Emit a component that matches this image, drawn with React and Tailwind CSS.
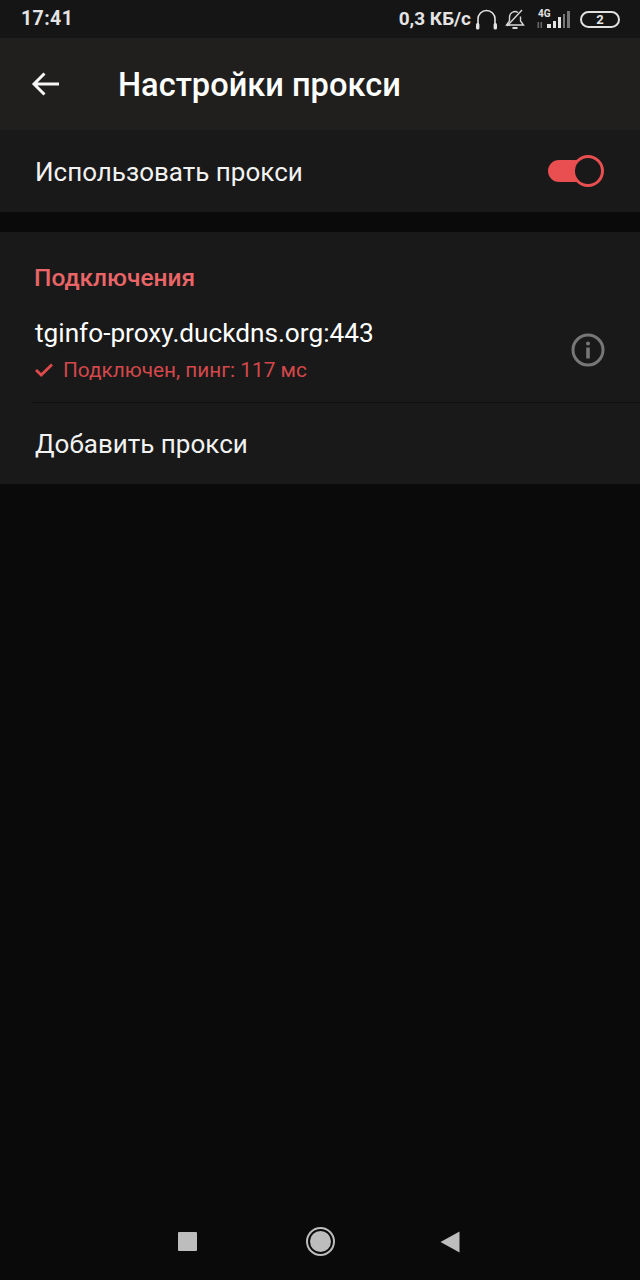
import React from 'react';

const roboto = { fontFamily: 'Roboto, sans-serif' };

function StatusBar() {
    return (
        <div className="h-[38px] bg-[#151515] flex items-center justify-between pl-[21px] pr-[20px] text-[#e4e4e4] font-bold">
            <span className="text-[19.5px] tracking-[0.4px]">17:41</span>
            <div className="flex items-center">
                <span className="text-[19px]">0,3 КБ/с</span>
                <svg className="ml-[4px]" width="23" height="22" viewBox="0 0 23 22" fill="none">
                    <path d="M3 17V11a8.5 8.5 0 0 1 17 0v6" stroke="#e4e4e4" strokeWidth="1.6" />
                    <rect x="1" y="15" width="3.4" height="6.5" rx="1.5" fill="#e4e4e4" />
                    <rect x="18.6" y="15" width="3.4" height="6.5" rx="1.5" fill="#e4e4e4" />
                </svg>
                <svg className="ml-[7px]" width="20" height="22" viewBox="0 0 20 22" fill="none" stroke="#d8d8d8" strokeWidth="1.4">
                    <path d="M4.5 13V9a5.5 5.5 0 0 1 8.5-4.5M15.5 8.5V13l3 4H4" />
                    <path d="M4.5 13 1.5 17H5" />
                    <path d="M7.5 20h5" strokeWidth="2" />
                    <path d="M17 2 2 18" />
                </svg>
                <div className="relative w-[36px] h-[20px] ml-[12px]">
                    <span className="absolute left-[1px] top-0 text-[10px] leading-[10px]">4G</span>
                    <svg className="absolute left-0 bottom-0" width="36" height="20" viewBox="0 0 36 20">
                        <rect x="0.5" y="13" width="1.6" height="6" fill="#666" />
                        <rect x="3.5" y="13" width="1.6" height="6" fill="#666" />
                        <rect x="10" y="15" width="4" height="4" fill="#e4e4e4" />
                        <rect x="16" y="12" width="3" height="7" fill="#e4e4e4" />
                        <rect x="21" y="8" width="3" height="11" fill="#e4e4e4" />
                        <rect x="26" y="5" width="2" height="14" fill="#777" />
                        <rect x="30" y="2" width="3" height="17" fill="#777" />
                    </svg>
                </div>
                <div className="w-[40px] h-[17px] ml-[7px] rounded-full border-2 border-[#e0e0e0] flex items-center justify-center text-[13px] leading-none">
                    2
                </div>
            </div>
        </div>
    );
}

function Toggle() {
    return (
        <div className="relative w-[56px] h-[32px] flex items-center">
            <div className="w-[40px] h-[22px] rounded-full bg-[#e94f50]" />
            <div className="absolute right-0 top-0 w-[32px] h-[32px] rounded-full bg-[#191919] border-[3px] border-[#e94f50]" />
        </div>
    );
}

export default function App() {
    return (
        <div className="relative h-[1280px] w-[640px] bg-[#0a0a0a] overflow-hidden flex flex-col" style={roboto}>
            <StatusBar />

            <div className="h-[92px] bg-[#201f1e] flex items-center">
                <svg className="ml-[31px]" width="29" height="26" viewBox="0 0 29 26" fill="none" stroke="#f5f5f5" strokeWidth="3">
                    <path d="M28 13H3M13.5 2.5 3 13l10.5 10.5" />
                </svg>
                <h1 className="ml-[58px] mt-[2px] text-[32.6px] font-medium text-white leading-none">Настройки прокси</h1>
            </div>

            <div className="h-[82px] bg-[#191919] flex items-center justify-between pl-[35px] pr-[36px]">
                <span className="text-[26px] text-[#f2f2f2] mt-[2px]">Использовать прокси</span>
                <Toggle />
            </div>

            <div className="mt-[20px] h-[252px] bg-[#191919] flex flex-col">
                <h2 className="mt-[32px] ml-[34px] text-[24.5px] leading-[28px] font-medium text-[#e96567]">Подключения</h2>
                <div className="flex items-center justify-between pl-[35px] pr-[35px] h-[107px] mt-[3px] pt-[3px]">
                    <div>
                        <div className="text-[26.2px] leading-[34px] text-white mt-[-1px]">tginfo-proxy.duckdns.org:443</div>
                        <div className="flex items-center mt-[6px]">
                            <svg width="18" height="14" viewBox="0 0 18 14" fill="none" stroke="#e04a4c" strokeWidth="2.8">
                                <path d="M1 7l5.2 5L17 1.5" />
                            </svg>
                            <span className="ml-[10px] text-[20.8px] leading-[28px] text-[#d4474a]">Подключен, пинг: 117 мс</span>
                        </div>
                    </div>
                    <svg width="34" height="34" viewBox="0 0 34 34" fill="none">
                        <circle cx="17" cy="17" r="15" stroke="#777" strokeWidth="3" />
                        <circle cx="17" cy="10.5" r="2" fill="#777" />
                        <rect x="15.2" y="14.5" width="3.6" height="11" fill="#777" />
                    </svg>
                </div>
                <div className="h-px bg-[#0f0f0f] ml-[32px]" />
                <div className="flex-1 flex items-center pl-[35px]">
                    <span className="text-[26px] text-[#f2f2f2] mt-[2px]">Добавить прокси</span>
                </div>
            </div>

            <div className="absolute bottom-0 left-0 right-0 h-[76px] flex items-center pb-[1px]">
                <div className="ml-[178px] w-[19px] h-[19px] rounded-[1px] bg-[#bdbdbd]" />
                <div className="ml-[109px] w-[29px] h-[29px] rounded-full border-[2px] border-[#bdbdbd] flex items-center justify-center">
                    <div className="w-[21px] h-[21px] rounded-full bg-[#bdbdbd]" />
                </div>
                <svg className="ml-[105px]" width="20" height="22" viewBox="0 0 20 22">
                    <path d="M0.5 11 19.5 0.5V21.5Z" fill="#bdbdbd" />
                </svg>
            </div>
        </div>
    );
}
